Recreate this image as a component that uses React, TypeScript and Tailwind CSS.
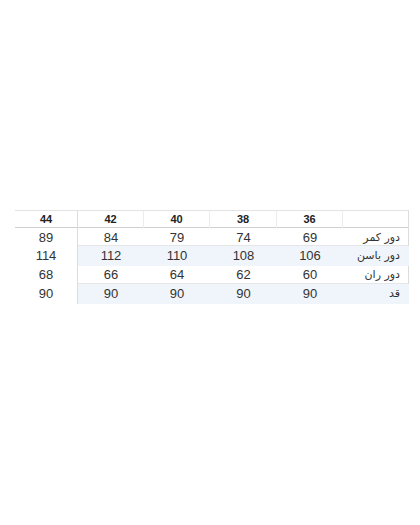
import React from "react";

const cols = ["44", "42", "40", "38", "36"];
const rows: { label: string; vals: string[]; shaded: boolean; h: string }[] = [
  { label: "دور کمر", vals: ["89", "84", "79", "74", "69"], shaded: false, h: "h-[18px]" },
  { label: "دور باسن", vals: ["114", "112", "110", "108", "106"], shaded: true, h: "h-[19px]" },
  { label: "دور ران", vals: ["68", "66", "64", "62", "60"], shaded: false, h: "h-[19px]" },
  { label: "قد", vals: ["90", "90", "90", "90", "90"], shaded: true, h: "h-[18px]" },
];

export default function App() {
  return (
    <div className="w-[420px] h-[525px] bg-white pt-[210px] pl-[15px] pr-[11px]" style={{ fontFamily: '"Liberation Sans", Arial, sans-serif' }}>
      <div className="w-[394px] border-t border-[#e3e3e3] border-r border-r-[#dcdcdc]">
        <div className="grid grid-cols-[63px_66px_66px_67px_66px_66px] h-[17px] border-b border-[#cfcfcf] text-[11px] font-bold text-[#222]">
          {cols.map((c, i) => (
            <div key={c} className={`flex items-center justify-center ${i === 0 ? "border-r border-[#dcdcdc]" : "border-r border-[#ececec]"}`}>
              {c}
            </div>
          ))}
          <div />
        </div>
        {rows.map((r) => (
          <div key={r.label} className={`grid grid-cols-[63px_66px_66px_67px_66px_66px] ${r.h} border-b border-[#e6e6e6] text-[13px] text-[#333]`}>
            {r.vals.map((v, i) => (
              <div
                key={i}
                className={`flex items-center justify-center ${i === 0 ? "border-r border-[#dcdcdc] bg-white" : r.shaded ? "bg-[#eff5fa]" : ""}`}
              >
                {v}
              </div>
            ))}
            <div
              dir="rtl"
              className={`flex items-center justify-start pr-[9px] text-[11px] text-[#333] ${r.shaded ? "bg-[#eff5fa]" : ""}`}
              style={{ fontFamily: '"DejaVu Sans", "Noto Sans", sans-serif' }}
            >
              {r.label}
            </div>
          </div>
        ))}
      </div>
    </div>
  );
}
